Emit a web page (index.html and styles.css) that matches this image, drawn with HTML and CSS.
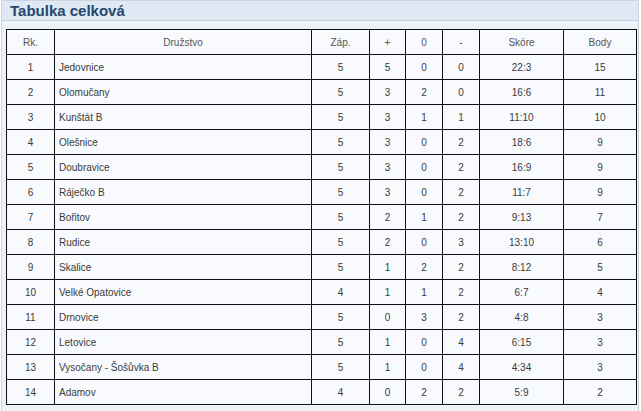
FILE: index.html
```html
<!DOCTYPE html>
<html lang="cs">
<head>
<meta charset="utf-8">
<link rel="stylesheet" href="styles.css">
</head>
<body>
<div class="panel">
  <div class="panel-head">Tabulka celková</div>
  <div class="panel-body">
    <table class="standings">
      <colgroup>
        <col class="c-rk"><col class="c-team"><col class="c-zap"><col class="c-w"><col class="c-d"><col class="c-l"><col class="c-score"><col class="c-pts">
      </colgroup>
      <thead>
        <tr><th>Rk.</th><th>Družstvo</th><th>Záp.</th><th>+</th><th>0</th><th>-</th><th>Skóre</th><th>Body</th></tr>
      </thead>
      <tbody>
        <tr><td>1</td><td class="team">Jedovnice</td><td>5</td><td>5</td><td>0</td><td>0</td><td>22:3</td><td>15</td></tr>
        <tr><td>2</td><td class="team">Olomučany</td><td>5</td><td>3</td><td>2</td><td>0</td><td>16:6</td><td>11</td></tr>
        <tr><td>3</td><td class="team">Kunštát B</td><td>5</td><td>3</td><td>1</td><td>1</td><td>11:10</td><td>10</td></tr>
        <tr><td>4</td><td class="team">Olešnice</td><td>5</td><td>3</td><td>0</td><td>2</td><td>18:6</td><td>9</td></tr>
        <tr><td>5</td><td class="team">Doubravice</td><td>5</td><td>3</td><td>0</td><td>2</td><td>16:9</td><td>9</td></tr>
        <tr><td>6</td><td class="team">Ráječko B</td><td>5</td><td>3</td><td>0</td><td>2</td><td>11:7</td><td>9</td></tr>
        <tr><td>7</td><td class="team">Bořitov</td><td>5</td><td>2</td><td>1</td><td>2</td><td>9:13</td><td>7</td></tr>
        <tr><td>8</td><td class="team">Rudice</td><td>5</td><td>2</td><td>0</td><td>3</td><td>13:10</td><td>6</td></tr>
        <tr><td>9</td><td class="team">Skalice</td><td>5</td><td>1</td><td>2</td><td>2</td><td>8:12</td><td>5</td></tr>
        <tr><td>10</td><td class="team">Velké Opatovice</td><td>4</td><td>1</td><td>1</td><td>2</td><td>6:7</td><td>4</td></tr>
        <tr><td>11</td><td class="team">Drnovice</td><td>5</td><td>0</td><td>3</td><td>2</td><td>4:8</td><td>3</td></tr>
        <tr><td>12</td><td class="team">Letovice</td><td>5</td><td>1</td><td>0</td><td>4</td><td>6:15</td><td>3</td></tr>
        <tr><td>13</td><td class="team">Vysočany - Šošůvka B</td><td>5</td><td>1</td><td>0</td><td>4</td><td>4:34</td><td>3</td></tr>
        <tr><td>14</td><td class="team">Adamov</td><td>4</td><td>0</td><td>2</td><td>2</td><td>5:9</td><td>2</td></tr>
      </tbody>
    </table>
  </div>
</div>
</body>
</html>
```
FILE: styles.css
```css
html, body {
  margin: 0;
  padding: 0;
  background: #ffffff;
}
body {
  font-family: "Liberation Sans", Arial, sans-serif;
}
.panel {
  margin-left: 1px;
  width: 636px;
  border: 1px solid #c9d5e3;
  background: #eef3f9;
  min-height: 430px;
}
.panel-head {
  height: 19px;
  line-height: 20px;
  padding-left: 8px;
  background: #dfe8f3;
  border-bottom: 1px solid #c3d1e2;
  color: #26476d;
  font-weight: bold;
  font-size: 15px;
}
.panel-body {
  padding: 8px 0 0 4px;
}
.standings {
  border-collapse: collapse;
  width: 630px;
  table-layout: fixed;
  background: #f8fafd;
  font-size: 10px;
  color: #3a3a3a;
}
.c-rk { width: 48px; }
.c-team { width: 257px; }
.c-zap { width: 58px; }
.c-w { width: 36px; }
.c-d { width: 37px; }
.c-l { width: 37px; }
.c-score { width: 84px; }
.c-pts { width: 73px; }
.standings th,
.standings td {
  border: 1px solid #111;
  height: 25px;
  padding: 0 4px;
  text-align: center;
  vertical-align: middle;
  box-sizing: border-box;
}
.standings th {
  font-weight: normal;
  color: #555;
}
.standings td.team {
  text-align: left;
}
```
